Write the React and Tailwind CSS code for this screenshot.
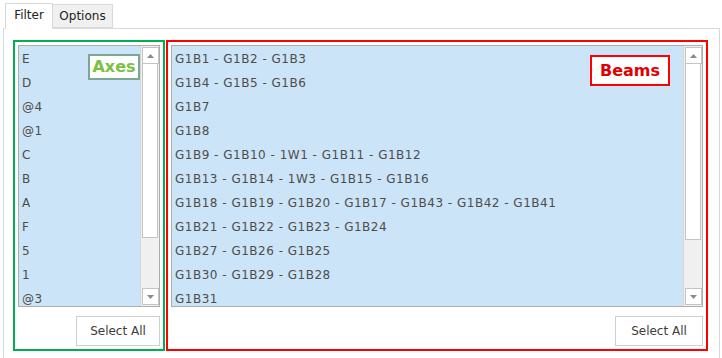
import React from "react";

const axes = ["E", "D", "@4", "@1", "C", "B", "A", "F", "5", "1", "@3"];
const beams = [
  "G1B1 - G1B2 - G1B3",
  "G1B4 - G1B5 - G1B6",
  "G1B7",
  "G1B8",
  "G1B9 - G1B10 - 1W1 - G1B11 - G1B12",
  "G1B13 - G1B14 - 1W3 - G1B15 - G1B16",
  "G1B18 - G1B19 - G1B20 - G1B17 - G1B43 - G1B42 - G1B41",
  "G1B21 - G1B22 - G1B23 - G1B24",
  "G1B27 - G1B26 - G1B25",
  "G1B30 - G1B29 - G1B28",
  "G1B31",
];

function Arrow({ up }) {
  return (
    <div className="h-[17px] w-[17px] border border-[#c4c4c4] bg-white flex items-center justify-center shrink-0">
      <svg width="7" height="4" viewBox="0 0 7 4">
        {up ? (
          <polygon points="0,4 7,4 3.5,0" fill="#8a8a8a" />
        ) : (
          <polygon points="0,0 7,0 3.5,4" fill="#8a8a8a" />
        )}
      </svg>
    </div>
  );
}

function Scrollbar({ thumb }) {
  return (
    <div className="w-[19px] flex flex-col bg-[#f0f0f0] border-l border-[#d6d6d6] p-px">
      <Arrow up />
      <div className="bg-white border border-[#c4c4c4] border-t-0" style={{ height: thumb }} />
      <div className="flex-1" />
      <Arrow />
    </div>
  );
}

function ListBox({ items, thumb }) {
  return (
    <div className="flex-1 flex border border-[#adadad] bg-[#cce4f7] overflow-hidden">
      <div className="flex-1 flex flex-col pt-[1px] pl-[3px]">
        {items.map((t, i) => (
          <div key={i} className="h-[24px] leading-[24px] text-[12px] text-[#4d4d4d] tracking-[0.5px] whitespace-nowrap">
            {t}
          </div>
        ))}
      </div>
      <Scrollbar thumb={thumb} />
    </div>
  );
}

function SelectAll({ w }) {
  return (
    <div className="flex justify-end pt-[9px]">
      <div className={`${w} h-[30px] border border-[#cfcfcf] bg-white flex items-center justify-center text-[12px] text-[#3c3c3c]`}>
        Select All
      </div>
    </div>
  );
}

export default function App() {
  return (
    <div className="w-[722px] h-[358px] bg-white overflow-hidden" style={{ fontFamily: '"DejaVu Sans", Verdana, sans-serif' }}>
      <div className="h-[28px] flex items-end pl-[5px] relative z-10">
        <div className="h-[26px] w-[48px] bg-white border border-[#d9d9d9] border-b-white flex items-center justify-center text-[12px] text-[#222] -mb-px pb-[2px]">
          Filter
        </div>
        <div className="h-[24px] w-[60px] bg-[#f0f0f0] border border-[#d9d9d9] border-l-0 flex items-center justify-center text-[12px] text-[#222]">
          Options
        </div>
      </div>
      <div className="ml-[3px] w-[717px] h-[340px] border border-[#d9d9d9] pt-[11px] pl-[9px] flex gap-[1px]">
        <div className="w-[152px] h-[311px] border-2 border-[#00b050] p-[3px] flex flex-col relative">
          <ListBox items={axes} thumb={174} />
          <SelectAll w="w-[84px]" />
          <div className="absolute left-[73px] top-[12px] w-[52px] h-[26px] border-2 border-[#7aa892] bg-white flex items-center justify-center text-[16px] font-bold text-[#7ac143]">
            Axes
          </div>
        </div>
        <div className="w-[542px] h-[311px] border-2 border-[#ff0000] p-[3px] flex flex-col relative">
          <ListBox items={beams} thumb={176} />
          <SelectAll w="w-[88px]" />
          <div className="absolute left-[422px] top-[13px] w-[80px] h-[31px] border-2 border-[#ff0000] bg-white flex items-center justify-center text-[16px] font-bold text-[#e00000]">
            Beams
          </div>
        </div>
      </div>
    </div>
  );
}
